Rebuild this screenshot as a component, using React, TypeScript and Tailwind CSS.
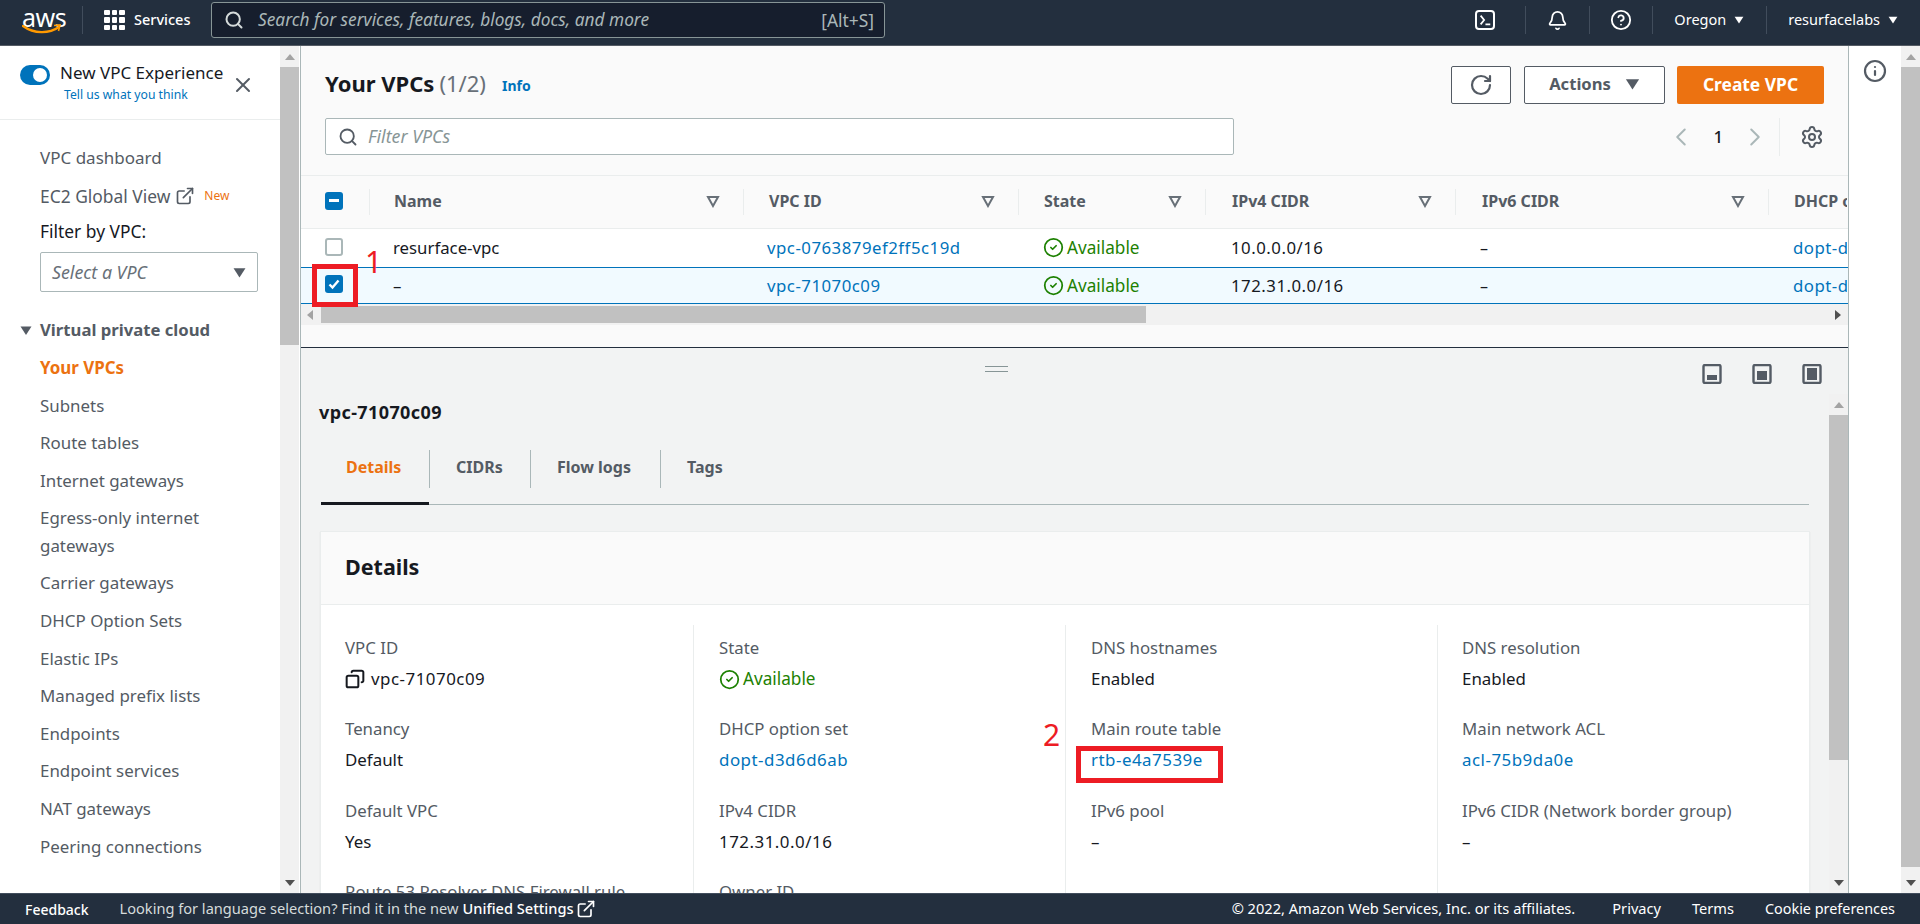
import React from 'react';
import { Bell, CircleCheck, CircleHelp, ChevronLeft, ChevronRight, Copy, ExternalLink, Info, RotateCw, Search, Settings, X } from 'lucide-react';

const Caret = ({ className = '' }: { className?: string }) => (
  <svg viewBox="0 0 12 10" className={className} fill="currentColor"><path d="M0.5 1h11L6 9.5z" /></svg>
);

const SortIcon = () => (
  <svg viewBox="0 0 14 14" className="w-[14px] h-[14px] text-[#687078]" fill="none" stroke="currentColor" strokeWidth="2"><path d="M2 3h10L7 12z" /></svg>
);

const Scrollbar = ({ thumbHeight }: { thumbHeight: number }) => (
  <div className="w-[19px] shrink-0 h-full bg-[#f1f1f1] flex flex-col items-center">
    <div className="h-[21px] shrink-0 flex items-center justify-center">
      <svg viewBox="0 0 10 6" className="w-[10px] h-[6px] text-[#a3a3a3]" fill="currentColor"><path d="M5 0l5 6H0z" /></svg>
    </div>
    <div className="w-full bg-[#c1c1c1] shrink-0" style={{ height: thumbHeight }} />
    <div className="flex-1" />
    <div className="h-[21px] shrink-0 flex items-center justify-center">
      <svg viewBox="0 0 10 6" className="w-[10px] h-[6px] text-[#505050]" fill="currentColor"><path d="M5 6l5-6H0z" /></svg>
    </div>
  </div>
);

const TopDivider = () => <div className="w-px h-[28px] bg-[#414d5c]" />;

const TopBar = () => (
  <header className="h-[46px] shrink-0 bg-[#232f3e] border-b border-[#545b64] pb-[5px] flex items-center text-white">
    <div className="w-[83px] h-[28px] shrink-0 flex justify-end pr-[20px] border-r border-[#414d5c]">
      <div className="relative w-[40px] h-[28px]">
        <span className="block text-[25px] leading-[22px] tracking-[-0.5px] text-center">aws</span>
        <svg viewBox="0 0 40 10" className="absolute left-0 bottom-0 w-[40px] h-[10px]" fill="none">
          <path d="M1 2c11 8 26 8 36 1" stroke="#ff9900" strokeWidth="2.4" strokeLinecap="round" />
          <path d="M32 1.5l6-.5-1.5 6" stroke="#ff9900" strokeWidth="1.6" />
        </svg>
      </div>
    </div>
    <div className="ml-[21px] grid grid-cols-3 gap-[2px] w-[21px] shrink-0">
      {Array.from({ length: 9 }).map((_, i) => (
        <span key={i} className="w-[5.5px] h-[5.5px] bg-white rounded-[1px]" />
      ))}
    </div>
    <span className="ml-[9px] w-[68px] text-[14.5px] font-medium">Services</span>
    <div className="ml-[9px] w-[674px] h-[36px] bg-[#161e2d] border border-[#879596] rounded-[3px] flex items-center pl-[12px] pr-[10px]">
      <Search size={20} strokeWidth={2.4} className="text-[#d5dbdb]" />
      <span className="ml-[14px] flex-1 italic text-[17.3px] text-[#aab7b8]">Search for services, features, blogs, docs, and more</span>
      <span className="text-[17.4px] text-[#aab7b8]">[Alt+S]</span>
    </div>
    <div className="flex-1" />
    <div className="w-[20px] h-[20px] border-2 border-white rounded-[4px] flex items-center justify-center">
      <svg viewBox="0 0 16 16" className="w-[14px] h-[14px]" fill="none" stroke="white" strokeWidth="2"><path d="M3 3l4 5-4 5M8.5 13H14" /></svg>
    </div>
    <div className="ml-[30px]"><TopDivider /></div>
    <Bell size={21} strokeWidth={2} className="ml-[21px]" />
    <div className="ml-[21px]"><TopDivider /></div>
    <CircleHelp size={22} strokeWidth={2} className="ml-[20px]" />
    <div className="ml-[20px]"><TopDivider /></div>
    <span className="ml-[21px] text-[14.5px]">Oregon</span>
    <Caret className="ml-[8px] w-[10px] h-[8px]" />
    <div className="ml-[22px]"><TopDivider /></div>
    <span className="ml-[21px] text-[14.5px]">resurfacelabs</span>
    <Caret className="ml-[8px] mr-[22px] w-[10px] h-[8px]" />
  </header>
);

const navItems: { label: string; className: string }[] = [
  { label: 'Your VPCs', className: 'h-[37.6px] text-[#ec7211] font-bold' },
  { label: 'Subnets', className: 'h-[37.6px]' },
  { label: 'Route tables', className: 'h-[37.6px]' },
  { label: 'Internet gateways', className: 'h-[37.6px]' },
  { label: 'Egress-only internet gateways', className: 'h-[65px] leading-[28px]' },
  { label: 'Carrier gateways', className: 'h-[37.6px]' },
  { label: 'DHCP Option Sets', className: 'h-[37.6px]' },
  { label: 'Elastic IPs', className: 'h-[37.6px]' },
  { label: 'Managed prefix lists', className: 'h-[37.6px]' },
  { label: 'Endpoints', className: 'h-[37.6px]' },
  { label: 'Endpoint services', className: 'h-[37.6px]' },
  { label: 'NAT gateways', className: 'h-[37.6px]' },
  { label: 'Peering connections', className: 'h-[37.6px]' },
];

const Sidebar = () => (
  <aside className="w-[301px] shrink-0 flex h-full bg-white border-r border-[#aab7b8]">
    <div className="w-[280px] shrink-0 overflow-hidden">
      <div className="h-[74px] border-b border-[#eaeded] flex">
        <div className="w-[30px] h-[20px] ml-[20px] mt-[19px] rounded-full bg-[#0073bb] flex items-center justify-end pr-[3px] shrink-0">
          <span className="w-[14px] h-[14px] rounded-full bg-white" />
        </div>
        <div className="ml-[10px] w-[172px] shrink-0 pt-[15px]">
          <div className="text-[17px] leading-[24px] text-[#16191f] whitespace-nowrap">New VPC Experience</div>
          <div className="ml-[4px] text-[12.2px] leading-[20px] text-[#0073bb]">Tell us what you think</div>
        </div>
        <X size={24} strokeWidth={2} className="mt-[27px] -ml-[1px] text-[#545b64] shrink-0" />
      </div>
      <div className="pl-[40px] pr-[22px] text-[17px] text-[#545b64]">
        <div className="h-[38px] mt-[19px] flex items-center">VPC dashboard</div>
        <div className="h-[38px] flex items-center whitespace-nowrap">
          <span className="text-[17.4px]">EC2 Global View</span>
          <ExternalLink size={20} strokeWidth={2} className="ml-[5px] shrink-0" />
          <span className="ml-[9px] text-[12px] text-[#ec7211]">New</span>
        </div>
        <div className="h-[33px] pb-[1px] flex items-center text-[17.4px] text-[#16191f]">Filter by VPC:</div>
        <div className="mt-[4px] h-[40px] border border-[#aab7b8] rounded-[2px] flex items-center pl-[11px] pr-[11px] justify-between">
          <span className="italic text-[17.8px] text-[#687078]">Select a VPC</span>
          <Caret className="w-[13px] h-[11px]" />
        </div>
      </div>
      <div className="mt-[26px] pl-[20px] h-[24px] flex items-center text-[16.7px] font-bold text-[#545b64]">
        <Caret className="w-[12px] h-[11px] text-[#545b64]" />
        <span className="ml-[8px]">Virtual private cloud</span>
      </div>
      <nav className="mt-[7px] pl-[40px] pr-[20px] text-[16.9px] text-[#545b64]">
        {navItems.map((item) => (
          <div key={item.label} className={'flex items-center ' + item.className}>
            <span>{item.label}</span>
          </div>
        ))}
      </nav>
    </div>
    <Scrollbar thumbHeight={278} />
  </aside>
);

const columns = [
  { label: 'VPC ID', pad: 'pl-[25px]' },
  { label: 'State', pad: 'pl-[25px]' },
  { label: 'IPv4 CIDR', pad: 'pl-[26px]' },
  { label: 'IPv6 CIDR', pad: 'pl-[26px]' },
];

const rowGrid = 'grid grid-cols-[68px_374px_275px_187px_250px_313px_79px] items-center';

const Checkbox = ({ state }: { state: 'empty' | 'checked' | 'mixed' }) => {
  if (state === 'empty') {
    return <span className="w-[18px] h-[18px] bg-white border-2 border-[#aab7b8] rounded-[3px]" />;
  }
  return (
    <span className="w-[18px] h-[18px] bg-[#0073bb] rounded-[3px] flex items-center justify-center">
      {state === 'mixed' ? (
        <span className="w-[10px] h-[2.5px] bg-white" />
      ) : (
        <svg viewBox="0 0 14 14" className="w-[14px] h-[14px]" fill="none" stroke="white" strokeWidth="2.4"><path d="M2.5 7.5l3 3 6-7" /></svg>
      )}
    </span>
  );
};

const Available = () => (
  <span className="flex items-center text-[#1d8102] text-[17.2px]">
    <CircleCheck size={21} strokeWidth={2} />
    <span className="ml-[3px]">Available</span>
  </span>
);

const Row = ({ selected, name, id, cidr }: { selected?: boolean; name: string; id: string; cidr: string }) => (
  <div className={selected ? rowGrid + ' h-[37px] bg-[#f1faff] border-y border-[#0073bb]' : rowGrid + ' h-[38px] bg-white'}>
    <div className="pl-[24px] pb-[3px] flex"><Checkbox state={selected ? 'checked' : 'empty'} /></div>
    <div className="pl-[24px] text-[16.8px] text-[#16191f]">{name}</div>
    <a className="pl-[24px] text-[16.8px] tracking-[0.5px] text-[#0073bb]">{id}</a>
    <div className="pl-[25px]"><Available /></div>
    <div className="pl-[26px] text-[16.8px] tracking-[0.5px] text-[#16191f]">{cidr}</div>
    <div className="pl-[25px] text-[#16191f]">–</div>
    <a className="pl-[25px] text-[16.8px] tracking-[0.5px] text-[#0073bb] whitespace-nowrap overflow-hidden">dopt-d3d6d6ab</a>
  </div>
);

const UpperPanel = () => (
  <section className="h-[302px] shrink-0 bg-[#fafafa] border-b border-[#232f3e] overflow-hidden text-[16px]">
    <div className="px-[24px] pt-[20px] flex items-center h-[58px]">
      <h1 className="text-[22px] font-bold text-[#16191f] pb-[3px]">Your VPCs</h1>
      <span className="ml-[5px] pb-[3px] text-[22px] text-[#687078]">(1/2)</span>
      <span className="ml-[16px] pt-[1px] text-[14px] font-bold text-[#0073bb]">Info</span>
      <div className="flex-1" />
      <button className="w-[60px] h-[38px] bg-white border border-[#545b64] rounded-[2px] flex items-center justify-center text-[#545b64]">
        <RotateCw size={24} strokeWidth={2.2} />
      </button>
      <button className="ml-[13px] w-[141px] h-[38px] pb-[2px] bg-white border border-[#545b64] rounded-[2px] flex items-center justify-center text-[16.6px] font-bold text-[#545b64]">
        Actions
        <Caret className="ml-[14px] w-[15px] h-[12px]" />
      </button>
      <button className="ml-[12px] w-[147px] h-[38px] pb-[2px] bg-[#ec7211] rounded-[2px] text-[17.4px] font-bold text-white">Create VPC</button>
    </div>
    <div className="px-[24px] mt-[14px] h-[37px] flex items-center">
      <div className="w-[909px] h-[37px] bg-white border border-[#aab7b8] rounded-[2px] flex items-center pl-[12px]">
        <Search size={20} strokeWidth={2.2} className="text-[#545b64]" />
        <span className="ml-[10px] italic text-[17.8px] text-[#879596]">Filter VPCs</span>
      </div>
      <div className="flex-1" />
      <ChevronLeft size={30} strokeWidth={1.6} className="text-[#aab7b8]" />
      <span className="mx-[17px] text-[16.8px] font-medium text-[#16191f]">1</span>
      <ChevronRight size={30} strokeWidth={1.6} className="text-[#aab7b8]" />
      <span className="ml-[9px] w-px h-[38px] bg-[#eaeded]" />
      <Settings size={24} strokeWidth={2} className="ml-[20px] text-[#545b64]" />
    </div>
    <div className={rowGrid + ' mt-[20px] h-[54px] border-y border-[#eaeded] font-bold text-[#545b64]'}>
      <div className="pl-[24px] pb-[3px] flex"><Checkbox state="mixed" /></div>
      <div className="h-[26px] pb-[2px] border-l border-[#eaeded] pl-[24px] pr-[23px] flex items-center justify-between"><span>Name</span><SortIcon /></div>
      {columns.map((c) => (
        <div key={c.label} className={'h-[26px] pb-[2px] border-l border-[#eaeded] pr-[23px] flex items-center justify-between ' + c.pad}><span>{c.label}</span><SortIcon /></div>
      ))}
      <div className="h-[26px] pb-[2px] border-l border-[#eaeded] pl-[25px] whitespace-nowrap overflow-hidden flex items-center">DHCP options set</div>
    </div>
    <Row name="resurface-vpc" id="vpc-0763879ef2ff5c19d" cidr="10.0.0.0/16" />
    <Row selected name="–" id="vpc-71070c09" cidr="172.31.0.0/16" />
    <div className="h-[21px] bg-[#f1f1f1] flex items-center">
      <svg viewBox="0 0 6 10" className="ml-[6px] w-[6px] h-[10px] text-[#a3a3a3]" fill="currentColor"><path d="M0 5l6-5v10z" /></svg>
      <div className="ml-[8px] w-[825px] h-[17px] bg-[#c1c1c1]" />
      <div className="flex-1" />
      <svg viewBox="0 0 6 10" className="mr-[7px] w-[6px] h-[10px] text-[#505050]" fill="currentColor"><path d="M6 5L0 0v10z" /></svg>
    </div>
  </section>
);

const PaneIcon = ({ fill }: { fill: string }) => (
  <svg viewBox="0 0 20 20" className="w-[20px] h-[20px]">
    <rect x="1.5" y="1" width="17" height="18" rx="1.5" fill="none" stroke="#545b64" strokeWidth="2.4" />
    <path d={fill} fill="#545b64" />
  </svg>
);

const tabs = [
  { label: 'CIDRs', width: 'w-[101px]' },
  { label: 'Flow logs', width: 'w-[130px]' },
];

const IdText = ({ children }: { children: React.ReactNode }) => <span className="tracking-[0.5px]">{children}</span>;
const IdLink = ({ children }: { children: React.ReactNode }) => <a className="tracking-[0.5px] text-[#0073bb]">{children}</a>;

const fields: { label: string; value?: React.ReactNode }[][] = [
  [
    { label: 'VPC ID', value: <span className="flex items-center"><Copy size={20} strokeWidth={2.4} className="-scale-x-100 mr-[6px]" /><IdText>vpc-71070c09</IdText></span> },
    { label: 'Tenancy', value: 'Default' },
    { label: 'Default VPC', value: 'Yes' },
    { label: 'Route 53 Resolver DNS Firewall rule groups' },
  ],
  [
    { label: 'State', value: <Available /> },
    { label: 'DHCP option set', value: <IdLink>dopt-d3d6d6ab</IdLink> },
    { label: 'IPv4 CIDR', value: <IdText>172.31.0.0/16</IdText> },
    { label: 'Owner ID' },
  ],
  [
    { label: 'DNS hostnames', value: 'Enabled' },
    { label: 'Main route table', value: <IdLink>rtb-e4a7539e</IdLink> },
    { label: 'IPv6 pool', value: '–' },
  ],
  [
    { label: 'DNS resolution', value: 'Enabled' },
    { label: 'Main network ACL', value: <IdLink>acl-75b9da0e</IdLink> },
    { label: 'IPv6 CIDR (Network border group)', value: '–' },
  ],
];

const colClass = ['pl-[24px] pr-[30px]', 'pl-[25px] pr-[30px] border-l border-[#eaeded]', 'pl-[25px] pr-[30px] border-l border-[#eaeded]', 'pl-[24px] pr-[30px] border-l border-[#eaeded]'];

const LowerPanel = () => (
  <section className="flex-1 min-h-0 bg-[#f2f3f3] flex flex-col overflow-hidden text-[16px]">
    <div className="h-[46px] shrink-0 flex items-center pr-[26px] relative">
      <div className="absolute left-[684px] top-[18px] w-[23px] h-[6px] border-y border-[#879596]" />
      <div className="flex-1" />
      <div className="flex gap-[30px] mt-[6px]">
        <PaneIcon fill="M5 11h10v5H5z" />
        <PaneIcon fill="M5 7h10v9H5z" />
        <PaneIcon fill="M5 4h10v12H5z" />
      </div>
    </div>
    <div className="flex-1 min-h-0 flex">
      <div className="flex-1 min-w-0 overflow-hidden">
        <h2 className="ml-[18px] h-[36px] flex items-center text-[18px] tracking-[0.4px] font-bold text-[#16191f]">vpc-71070c09</h2>
        <div className="mt-[20px] mx-[20px] h-[55px] border-b border-[#aab7b8] flex items-start">
          <div className="w-[108px] h-[55px] border-b-[3px] border-[#16191f] pl-[25px] leading-[34px] font-bold text-[#ec7211]">Details</div>
          <div className="w-px h-[38px] bg-[#aab7b8]" />
          {tabs.map((t) => (
            <div key={t.label} className={t.width + ' h-[38px] border-r border-[#aab7b8] pl-[26px] leading-[34px] font-bold text-[#545b64]'}>{t.label}</div>
          ))}
          <div className="pl-[26px] leading-[34px] font-bold text-[#545b64]">Tags</div>
        </div>
        <div className="mt-[26px] mx-[19px] bg-white border border-[#eaeded] shadow-[0_1px_1px_rgba(0,0,0,0.1)]">
          <div className="h-[73px] pb-[2px] bg-[#fafafa] border-b border-[#eaeded] pl-[24px] flex items-center text-[21.5px] font-bold text-[#16191f]">Details</div>
          <div className="pt-[20px] grid grid-cols-4">
            {fields.map((col, i) => (
              <div key={i} className={colClass[i]}>
                {col.map((f) => (
                  <div key={f.label} className="h-[81.3px] pt-[11px]">
                    <div className="leading-[24px] text-[16.8px] text-[#545b64]">{f.label}</div>
                    {f.value && <div className="mt-[7px] h-[24px] leading-[24px] text-[16.9px] text-[#16191f]">{f.value}</div>}
                  </div>
                ))}
              </div>
            ))}
          </div>
        </div>
      </div>
      <Scrollbar thumbHeight={345} />
    </div>
  </section>
);

const Footer = () => (
  <footer className="relative z-10 h-[31px] shrink-0 bg-[#232f3e] border-t border-[#414d5c] flex items-center text-[14.6px] text-white">
    <span className="ml-[25px] font-medium text-[14px]">Feedback</span>
    <span className="ml-[31px] text-[#d5dbdb]">Looking for language selection? Find it in the new</span>
    <span className="ml-[4px] text-white font-medium">Unified Settings</span>
    <ExternalLink size={20} strokeWidth={2} className="ml-[2px]" />
    <div className="flex-1" />
    <span>© 2022, Amazon Web Services, Inc. or its affiliates.</span>
    <span className="ml-[37px]">Privacy</span>
    <span className="ml-[31px]">Terms</span>
    <span className="ml-[31px] mr-[25px] text-[14.4px]">Cookie preferences</span>
  </footer>
);

export default function App() {
  return (
    <div className="relative w-[1920px] h-[924px] flex flex-col overflow-hidden font-['Noto_Sans',sans-serif]">
      <TopBar />
      <div className="flex-1 min-h-0 flex">
        <Sidebar />
        <main className="w-[1547px] shrink-0 flex flex-col">
          <UpperPanel />
          <LowerPanel />
        </main>
        <aside className="flex-1 bg-white border-l border-[#aab7b8] flex">
          <div className="flex-1 pt-[13px] flex justify-center">
            <Info size={24} strokeWidth={2.2} className="text-[#545b64]" />
          </div>
          <Scrollbar thumbHeight={800} />
        </aside>
      </div>
      <Footer />
      <div className="absolute left-[312px] top-[264px] w-[46px] h-[43px] border-[5px] border-[#ed1c24]" />
      <span className="absolute left-[365px] top-[244px] text-[30px] leading-[36px] text-[#ed1c24]">1</span>
      <div className="absolute left-[1076px] top-[746px] w-[147px] h-[37px] border-[5px] border-[#ed1c24]" />
      <span className="absolute left-[1043px] top-[717px] text-[30px] leading-[36px] text-[#ed1c24]">2</span>
    </div>
  );
}
